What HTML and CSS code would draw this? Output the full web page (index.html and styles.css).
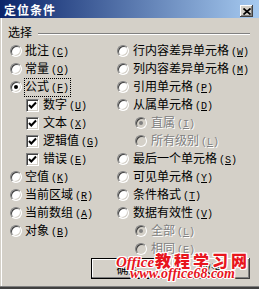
FILE: index.html
```html
<!DOCTYPE html>
<html lang="zh-CN">
<head>
<meta charset="utf-8">
<title>定位条件</title>
<link rel="stylesheet" href="styles.css">
</head>
<body>
<div class="dialog">
  <div class="titlebar">
    <span class="title">定位条件</span>
    <span class="close"><svg width="8" height="7" viewBox="0 0 8 7"><path d="M0.5 0.5 L7.5 6.5 M7.5 0.5 L0.5 6.5" stroke="#000" stroke-width="1.7" fill="none"/></svg></span>
  </div>
  <div class="content">
    <div class="group-head"><span class="group-label">选择</span><span class="group-line"></span></div>
    <div class="cols">
      <div class="col col-left">
        <div class="row"><span class="radio"></span><span class="lbl">批注<span class="key">(<u>C</u>)</span></span></div>
        <div class="row"><span class="radio"></span><span class="lbl">常量<span class="key">(<u>O</u>)</span></span></div>
        <div class="row"><span class="radio"><span class="dot"></span></span><span class="lbl focus">公式<span class="key">(<u>F</u>)</span></span></div>
        <div class="row"><span class="check"><svg width="9" height="9" viewBox="0 0 9 9"><path d="M1 4 L3.3 6.5 L8 1.5" stroke="#000" stroke-width="2" fill="none"/></svg></span><span class="lbl">数字<span class="key">(<u>U</u>)</span></span></div>
        <div class="row"><span class="check"><svg width="9" height="9" viewBox="0 0 9 9"><path d="M1 4 L3.3 6.5 L8 1.5" stroke="#000" stroke-width="2" fill="none"/></svg></span><span class="lbl">文本<span class="key">(<u>X</u>)</span></span></div>
        <div class="row"><span class="check"><svg width="9" height="9" viewBox="0 0 9 9"><path d="M1 4 L3.3 6.5 L8 1.5" stroke="#000" stroke-width="2" fill="none"/></svg></span><span class="lbl">逻辑值<span class="key">(<u>G</u>)</span></span></div>
        <div class="row"><span class="check"><svg width="9" height="9" viewBox="0 0 9 9"><path d="M1 4 L3.3 6.5 L8 1.5" stroke="#000" stroke-width="2" fill="none"/></svg></span><span class="lbl">错误<span class="key">(<u>E</u>)</span></span></div>
        <div class="row"><span class="radio"></span><span class="lbl">空值<span class="key">(<u>K</u>)</span></span></div>
        <div class="row"><span class="radio"></span><span class="lbl">当前区域<span class="key">(<u>R</u>)</span></span></div>
        <div class="row"><span class="radio"></span><span class="lbl">当前数组<span class="key">(<u>A</u>)</span></span></div>
        <div class="row"><span class="radio"></span><span class="lbl">对象<span class="key">(<u>B</u>)</span></span></div>
      </div>
      <div class="col col-right">
        <div class="row"><span class="radio"></span><span class="lbl">行内容差异单元格<span class="key">(<u>W</u>)</span></span></div>
        <div class="row"><span class="radio"></span><span class="lbl">列内容差异单元格<span class="key">(<u>M</u>)</span></span></div>
        <div class="row"><span class="radio"></span><span class="lbl">引用单元格<span class="key">(<u>P</u>)</span></span></div>
        <div class="row"><span class="radio"></span><span class="lbl">从属单元格<span class="key">(<u>D</u>)</span></span></div>
        <div class="row sub"><span class="radio disabled"><span class="dot"></span></span><span class="lbl dim">直属<span class="key">(<u>I</u>)</span></span></div>
        <div class="row sub"><span class="radio disabled"></span><span class="lbl dim">所有级别<span class="key">(<u>L</u>)</span></span></div>
        <div class="row"><span class="radio"></span><span class="lbl">最后一个单元格<span class="key">(<u>S</u>)</span></span></div>
        <div class="row"><span class="radio"></span><span class="lbl">可见单元格<span class="key">(<u>Y</u>)</span></span></div>
        <div class="row"><span class="radio"></span><span class="lbl">条件格式<span class="key">(<u>T</u>)</span></span></div>
        <div class="row"><span class="radio"></span><span class="lbl">数据有效性<span class="key">(<u>V</u>)</span></span></div>
        <div class="row sub"><span class="radio disabled"><span class="dot"></span></span><span class="lbl dim">全部<span class="key">(<u>L</u>)</span></span></div>
        <div class="row sub"><span class="radio disabled"></span><span class="lbl dim">相同<span class="key">(<u>E</u>)</span></span></div>
      </div>
    </div>
    <div class="buttons">
      <button class="btn btn-default">确定</button>
      <button class="btn btn-cancel">取消</button>
    </div>
  </div>
  <div class="watermark">
    <div class="wm1"><span class="wm-en">Office</span><span class="wm-cn">教程学习网</span></div>
    <div class="wm2">www.office68.com</div>
  </div>
</div>
</body>
</html>
```
FILE: styles.css
```css
body {
  margin: 0;
  background: #D4D0C8;
}

.dialog {
  position: relative;
  width: 259px;
  height: 289px;
  box-sizing: border-box;
  display: flex;
  flex-direction: column;
  background: #D4D0C8;
  font-family: "Noto Sans CJK SC", sans-serif;
  font-size: 12px;
  color: #000;
  border-bottom: 2px solid #404040;
  overflow: hidden;
}

.titlebar {
  height: 18px;
  flex: none;
  display: flex;
  align-items: flex-start;
  justify-content: space-between;
  background: linear-gradient(to right, #0A246A, #A6CAF0);
  padding: 0 6px 0 4px;
}

.title {
  color: #fff;
  font-weight: bold;
  font-size: 12px;
  line-height: 12px;
  margin-top: 4px;
  letter-spacing: 1px;
}

.close {
  width: 13px;
  height: 12px;
  margin-top: 5px;
  box-sizing: border-box;
  background: #D4D0C8;
  box-shadow: inset -1px -1px #404040, inset 1px 1px #fff, inset -2px -2px #808080;
  display: flex;
  align-items: center;
  justify-content: center;
}

.close svg {
  display: block;
}

.content {
  flex: 1;
  display: flex;
  flex-direction: column;
  box-shadow: inset 1px 0 #D4D0C8, inset 2px 0 #fff;
  border-bottom: 1px solid #808080;
}

.group-head {
  display: flex;
  align-items: flex-start;
  height: 14px;
  margin-top: 7px;
  padding: 0 9px 0 8px;
}

.group-label {
  line-height: 14px;
}

.group-line {
  flex: 1;
  margin-left: 6px;
  margin-top: 8px;
  height: 0;
  border-top: 1px solid #808080;
  border-bottom: 1px solid #fff;
}

.cols {
  display: flex;
  margin-top: 3px;
  padding-left: 10px;
}

.col-left {
  width: 107px;
}

.col {
  display: flex;
  flex-direction: column;
}

.row {
  height: 18px;
  display: flex;
  align-items: center;
  white-space: nowrap;
}

.radio {
  width: 12px;
  height: 12px;
  box-sizing: border-box;
  border-radius: 50%;
  background: #fff;
  border: 1px solid;
  border-color: #808080 #fff #fff #808080;
  box-shadow: inset 1px 1px #404040, inset -1px -1px #D4D0C8;
  margin-right: 3px;
  flex: none;
  display: flex;
  align-items: center;
  justify-content: center;
}

.col-right .radio {
  margin-right: 4px;
}

.sub .radio {
  margin-left: 18px;
}

.radio.disabled {
  background: #D4D0C8;
}

.dot {
  width: 4px;
  height: 4px;
  border-radius: 50%;
  background: #000;
}

.radio.disabled .dot {
  background: #808080;
}

.check {
  width: 13px;
  height: 13px;
  box-sizing: border-box;
  background: #fff;
  border: 1px solid;
  border-color: #808080 #fff #fff #808080;
  box-shadow: inset 1px 1px #404040, inset -1px -1px #D4D0C8;
  margin-left: 16px;
  margin-right: 4px;
  flex: none;
  display: flex;
  align-items: center;
  justify-content: center;
}

.check svg {
  display: block;
}

.lbl {
  line-height: 14px;
}

.focus {
  outline: 1px dotted #000;
  padding-right: 1px;
}

.key {
  font-family: "Liberation Mono", monospace;
  font-size: 10px;
  margin-left: 2px;
}

.dim {
  color: #808080;
  text-shadow: 1px 1px 0 #fff;
}

.buttons {
  display: flex;
  justify-content: flex-end;
  gap: 6px;
  padding-right: 9px;
}

.btn {
  height: 21px;
  box-sizing: border-box;
  font-family: "Noto Sans CJK SC", sans-serif;
  font-size: 12px;
  color: #000;
  background: #D4D0C8;
  border: none;
  padding: 0;
  box-shadow: inset -1px -1px #404040, inset 1px 1px #fff, inset -2px -2px #808080;
}

.btn-default {
  width: 75px;
  border: 1px solid #000;
  box-shadow: inset -1px -1px #808080, inset 1px 1px #fff;
}

.btn-cancel {
  width: 78px;
}

.watermark {
  position: absolute;
  left: 116px;
  top: 253px;
  color: #E8161E;
  font-weight: bold;
  pointer-events: none;
  text-shadow: 1px 0 #fff, -1px 0 #fff, 0 1px #fff, 0 -1px #fff, 1px 1px #fff, -1px -1px #fff, 1px -1px #fff, -1px 1px #fff;
}

.wm1 {
  display: flex;
  align-items: baseline;
  height: 15px;
  line-height: 15px;
}

.wm-en {
  font-family: "Liberation Serif", serif;
  font-style: italic;
  font-size: 15px;
}

.wm-cn {
  font-family: "Noto Sans CJK SC", sans-serif;
  font-size: 16px;
  font-weight: 900;
  letter-spacing: 3px;
  margin-left: 1px;
}

.wm2 {
  margin-left: 14px;
  font-family: "Liberation Serif", serif;
  font-style: italic;
  font-size: 14px;
  line-height: 12px;
}
```
